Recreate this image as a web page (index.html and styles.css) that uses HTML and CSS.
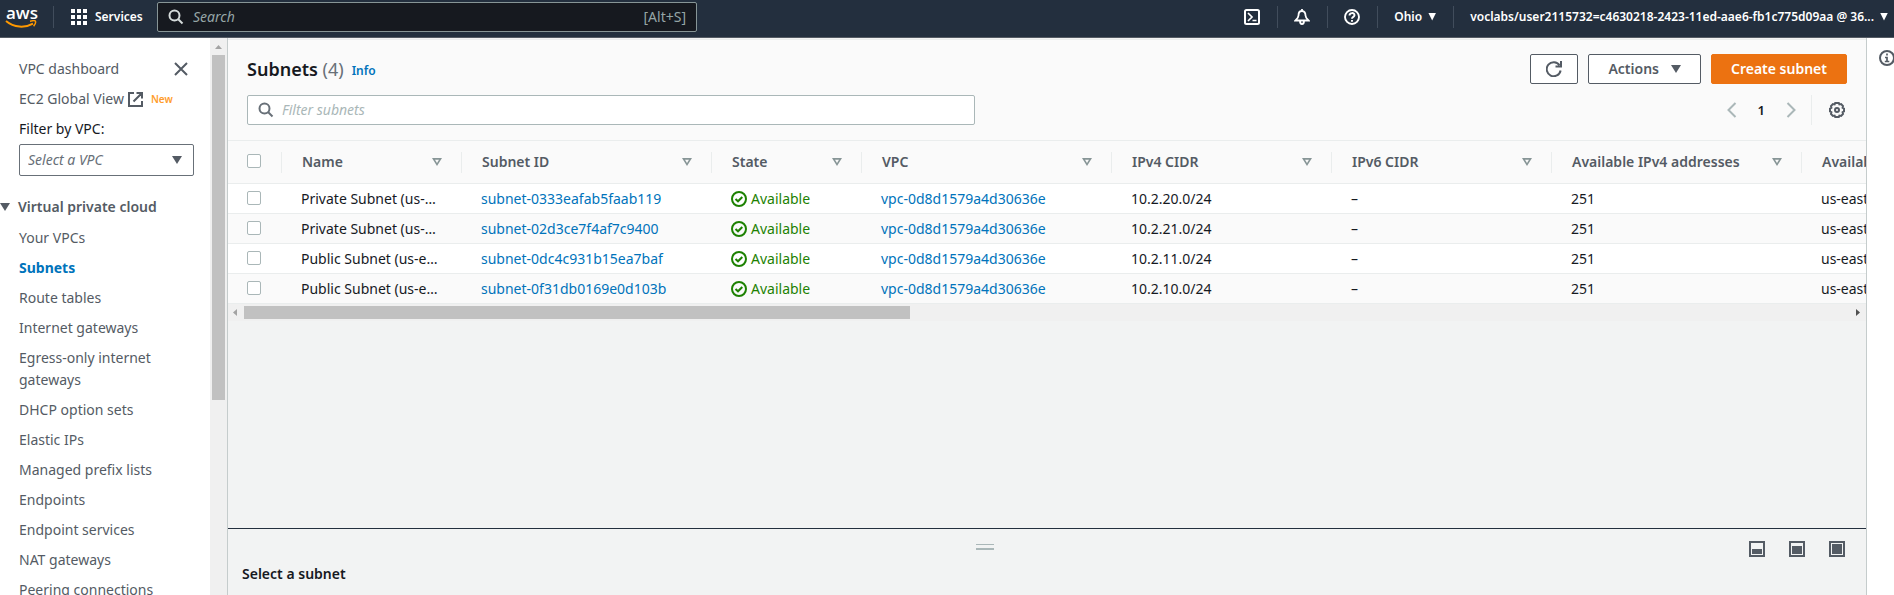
FILE: index.html
```html
<!DOCTYPE html>
<html lang="en">
<head>
<meta charset="utf-8">
<title>Subnets | VPC Management Console</title>
<link rel="stylesheet" href="styles.css">
</head>
<body>
<header class="topbar">
  <a class="logo" href="#" aria-label="aws">
    <span class="logo-text">aws</span>
    <svg class="logo-smile" width="32" height="9" viewBox="0 0 32 9"><path d="M1 1C9 7.800 20 8.200 28 3.600" fill="none" stroke="#f90" stroke-width="2"/><path d="M25 1.300C27.500.6 30 .5 30.400 1.200 30.800 2 30 4.600 28.600 6.300" fill="none" stroke="#f90" stroke-width="1.500"/></svg>
  </a>
  <button class="services" type="button">
    <svg width="16" height="16" fill="#fff"><path d="M0 0h4v4H0zM6 0h4v4H6zM12 0h4v4h-4zM0 6h4v4H0zM6 6h4v4H6zM12 6h4v4h-4zM0 12h4v4H0zM6 12h4v4H6zM12 12h4v4h-4z"/></svg>
    Services
  </button>
  <label class="global-search">
    <svg width="16" height="16" viewBox="0 0 16 16" fill="none" stroke="#d5dbdb" stroke-width="2"><circle cx="6.500" cy="6.500" r="5"/><path d="M10 10l4.500 4.500"/></svg>
    <input type="search" placeholder="Search" aria-label="Search">
    <span>[Alt+S]</span>
  </label>
  <nav class="utilities">
    <button type="button" aria-label="CloudShell"><svg width="16" height="16" viewBox="0 0 16 16" fill="none" stroke="#fff" stroke-width="2"><rect x="1" y="1" width="14" height="14" rx="1.500"/><path d="M4 4l4 4-4 4M8.500 11.500h4" stroke-width="1.700"/></svg></button>
    <button type="button" aria-label="Notifications"><svg width="16" height="16" viewBox="0 0 16 16" fill="none" stroke="#fff" stroke-width="1.800"><path d="M8 0v2M8 2C5.500 2 4.500 4 4.500 6.500 4.500 8.500 3 10 1.500 11.500h13C13 10 11.500 8.500 11.500 6.500 11.500 4 10.500 2 8 2zM6 12c0 4 4 4 4 0"/></svg></button>
    <button type="button" aria-label="Help"><svg width="16" height="16" viewBox="0 0 16 16" fill="none" stroke="#fff" stroke-width="1.900"><circle cx="8" cy="8" r="7"/><path d="M5.500 6.500C5.500 3.300 10.500 3.300 10.500 6.300 10.500 8 8 7.800 8 9.800M8 11v1.700"/></svg></button>
    <button type="button" class="region">Ohio <i class="caret"></i></button>
    <button type="button" class="account"><span>voclabs/user2115732=c4630218-2423-11ed-aae6-fb1c775d09aa @ 36...</span> <i class="caret"></i></button>
  </nav>
</header>
<div class="shell">
  <aside class="sidebar">
    <nav class="side-nav">
      <div class="side-row"><a href="#">VPC dashboard</a>
        <button type="button" class="close" aria-label="Close"><svg width="14" height="14" viewBox="0 0 14 14" stroke="#545b64" stroke-width="2"><path d="M1 1l12 12M13 1L1 13"/></svg></button></div>
      <a class="ec2" href="#">EC2 Global View
        <svg width="15" height="15" viewBox="0 0 15 15" fill="none" stroke="#545b64" stroke-width="2"><path d="M6 1H1v13h13V9M8.500 1H14v5.500M14 1L5.500 9.500"/></svg>
        <span class="new">New</span></a>
      <label for="vpc">Filter by VPC:</label>
      <div class="select-wrap"><select id="vpc"><option>Select a VPC</option></select></div>
      <h2><i class="caret"></i>Virtual private cloud</h2>
      <ul>
        <li><a href="#">Your VPCs</a></li>
        <li><a href="#" class="current">Subnets</a></li>
        <li><a href="#">Route tables</a></li>
        <li><a href="#">Internet gateways</a></li>
        <li><a href="#">Egress-only internet gateways</a></li>
        <li><a href="#">DHCP option sets</a></li>
        <li><a href="#">Elastic IPs</a></li>
        <li><a href="#">Managed prefix lists</a></li>
        <li><a href="#">Endpoints</a></li>
        <li><a href="#">Endpoint services</a></li>
        <li><a href="#">NAT gateways</a></li>
        <li><a href="#">Peering connections</a></li>
      </ul>
    </nav>
    <div class="vscroll"><i class="up"></i><div class="thumb"></div></div>
  </aside>
  <main class="content">
    <section class="panel">
      <div class="panel-head">
        <h1>Subnets <span>(4)</span></h1><a class="info" href="#">Info</a>
        <div class="actions">
          <button type="button" class="btn refresh" aria-label="Refresh"><svg width="16" height="16" viewBox="0 0 16 16" fill="none" stroke="#545b64" stroke-width="2"><path d="M14.600 9.500A7 7 0 1 1 13.500 4.300M15 0v5.500H9.500"/></svg></button>
          <button type="button" class="btn">Actions <i class="caret"></i></button>
          <button type="button" class="btn primary">Create subnet</button>
        </div>
      </div>
      <div class="tools">
        <label class="filter">
          <svg width="16" height="16" viewBox="0 0 16 16" fill="none" stroke="#687078" stroke-width="2"><circle cx="6.500" cy="6.500" r="5"/><path d="M10 10l4.500 4.500"/></svg>
          <input type="search" placeholder="Filter subnets" aria-label="Filter subnets">
        </label>
        <div class="pager">
          <button type="button" aria-label="Previous page"><svg width="10" height="16" viewBox="0 0 10 16" fill="none" stroke="#aab7b8" stroke-width="2"><path d="M8.500 1L1.500 8l7 7"/></svg></button>
          <span>1</span>
          <button type="button" aria-label="Next page"><svg width="10" height="16" viewBox="0 0 10 16" fill="none" stroke="#aab7b8" stroke-width="2"><path d="M1.500 1l7 7-7 7"/></svg></button>
          <button type="button" class="gear" aria-label="Preferences"><svg width="16" height="16" viewBox="0 0 16 16" fill="none" stroke="#545b64" stroke-width="2"><path d="M6.200 1h3.600l.6 1.400 1.700-.3 1.900 2-.4 1.700L15 6.500v3l-1.400.7.400 1.700-1.900 2-1.700-.3L9.800 15H6.200l-.6-1.400-1.700.3-1.900-2 .4-1.700L1 9.500v-3l1.400-.7L2 4.100l1.900-2 1.700.3z"/><circle cx="8" cy="8" r="2"/></svg></button>
        </div>
      </div>
      <div class="table-clip">
      <table>
        <colgroup><col class="c-check"><col class="c-name"><col class="c-wide"><col class="c-state"><col class="c-wide"><col class="c-cidr"><col class="c-cidr"><col class="c-wide"><col class="c-wide"></colgroup>
        <thead><tr>
          <th><input type="checkbox" aria-label="Select all"></th>
          <th><div>Name<i class="sort"></i></div></th>
          <th><div>Subnet ID<i class="sort"></i></div></th>
          <th><div>State<i class="sort"></i></div></th>
          <th><div>VPC<i class="sort"></i></div></th>
          <th><div>IPv4 CIDR<i class="sort"></i></div></th>
          <th><div>IPv6 CIDR<i class="sort"></i></div></th>
          <th><div>Available IPv4 addresses<i class="sort"></i></div></th>
          <th><div>Availability Zone</div></th>
        </tr></thead>
        <tbody>
          <tr><td><input type="checkbox" aria-label="Select subnet 1"></td><td>Private Subnet (us-…</td><td><a href="#">subnet-0333eafab5faab119</a></td><td class="ok"><svg width="16" height="16" viewBox="0 0 16 16"><circle cx="8" cy="8" r="7"/><path d="M4.500 8l2.500 2.300 4.300-4.300"/></svg>Available</td><td><a href="#">vpc-0d8d1579a4d30636e</a></td><td>10.2.20.0/24</td><td>–</td><td>251</td><td>us-east-2a</td></tr>
          <tr><td><input type="checkbox" aria-label="Select subnet 2"></td><td>Private Subnet (us-…</td><td><a href="#">subnet-02d3ce7f4af7c9400</a></td><td class="ok"><svg width="16" height="16" viewBox="0 0 16 16"><circle cx="8" cy="8" r="7"/><path d="M4.500 8l2.500 2.300 4.300-4.300"/></svg>Available</td><td><a href="#">vpc-0d8d1579a4d30636e</a></td><td>10.2.21.0/24</td><td>–</td><td>251</td><td>us-east-2b</td></tr>
          <tr><td><input type="checkbox" aria-label="Select subnet 3"></td><td>Public Subnet (us-e…</td><td><a href="#">subnet-0dc4c931b15ea7baf</a></td><td class="ok"><svg width="16" height="16" viewBox="0 0 16 16"><circle cx="8" cy="8" r="7"/><path d="M4.500 8l2.500 2.300 4.300-4.300"/></svg>Available</td><td><a href="#">vpc-0d8d1579a4d30636e</a></td><td>10.2.11.0/24</td><td>–</td><td>251</td><td>us-east-2b</td></tr>
          <tr><td><input type="checkbox" aria-label="Select subnet 4"></td><td>Public Subnet (us-e…</td><td><a href="#">subnet-0f31db0169e0d103b</a></td><td class="ok"><svg width="16" height="16" viewBox="0 0 16 16"><circle cx="8" cy="8" r="7"/><path d="M4.500 8l2.500 2.300 4.300-4.300"/></svg>Available</td><td><a href="#">vpc-0d8d1579a4d30636e</a></td><td>10.2.10.0/24</td><td>–</td><td>251</td><td>us-east-2a</td></tr>
        </tbody>
      </table>
      </div>
      <div class="hscroll"><i class="left"></i><div class="rail"><div class="thumb"></div></div><i class="right"></i></div>
    </section>
    <section class="split">
      <div class="split-bar">
        <span class="handle"></span>
        <div class="sizes">
          <button type="button" aria-label="Small panel"><svg width="16" height="16" viewBox="0 0 16 16"><rect x="1" y="1" width="14" height="14"/><path d="M3 8h10v5H3z"/></svg></button>
          <button type="button" aria-label="Medium panel"><svg width="16" height="16" viewBox="0 0 16 16"><rect x="1" y="1" width="14" height="14"/><path d="M3 5h10v8H3z"/></svg></button>
          <button type="button" aria-label="Full panel"><svg width="16" height="16" viewBox="0 0 16 16"><rect x="1" y="1" width="14" height="14"/><path d="M3 3h10v10H3z"/></svg></button>
        </div>
      </div>
      <h3>Select a subnet</h3>
    </section>
  </main>
  <aside class="help">
    <button type="button" aria-label="Open help"><svg width="16" height="16" viewBox="0 0 16 16" fill="none" stroke="#545b64" stroke-width="2"><circle cx="8" cy="8" r="7"/><path d="M8 3.500v2M6 7.500h2v4M5.800 11.500h4.500" stroke-width="1.700"/></svg></button>
  </aside>
</div>
</body>
</html>
```
FILE: styles.css
```css
* { box-sizing: border-box; }
body {
  margin: 0; height: 100vh; overflow: hidden;
  display: flex; flex-direction: column;
  font: 14px/22px "Noto Sans", "Open Sans", sans-serif; color: #16191f; background: #fff;
}
button { font: inherit; color: inherit; background: none; border: 0; padding: 0; display: inline-flex; align-items: center; }
input { font: inherit; }
a { color: #0073bb; text-decoration: none; }
svg { display: block; flex: none; }
h1, h2, h3, ul { margin: 0; padding: 0; }
.caret { display: inline-block; width: 10px; height: 8px; background: currentColor; clip-path: polygon(0 0, 100% 0, 50% 100%); flex: none; }

.topbar { flex: none; height: 38px; padding: 0 6px 4px 5px; display: flex; align-items: center; background: #232f3e; border-bottom: 1px solid #545b64; color: #fff; font-size: 12px; font-weight: 600; }
.logo { width: 49px; height: 22px; border-right: 1px solid #414d5c; color: #fff; display: flex; flex-direction: column; }
.logo-text { font: 600 17px/14px "Open Sans", sans-serif; padding-left: 1px; }
.logo-smile { flex: none; }
.services { gap: 8px; padding: 0 17px; width: 103px; }
.global-search { width: 540px; height: 30px; display: flex; align-items: center; gap: 9px; padding: 0 10px; background: #16191f; border: 1px solid #879596; border-radius: 2px; font-size: 14px; font-weight: 400; color: #95a5a6; }
.global-search input, .filter input { flex: 1; min-width: 0; border: 0; outline: 0; padding: 0; background: none; color: inherit; }
.global-search input::placeholder { color: #95a5a6; font-style: italic; opacity: 1; }
.utilities { margin-left: auto; display: flex; align-items: center; }
.utilities button { height: 22px; padding: 0 17px 0 16px; border-right: 1px solid #414d5c; }
.utilities .caret { width: 8px; margin-left: 6px; }
.utilities .account { border: 0; padding-right: 0; }

.shell { flex: 1; min-height: 0; display: flex; }
.sidebar { flex: none; width: 227px; display: flex; }
.side-nav { flex: 1; padding: 20px 16px 0 19px; display: flex; flex-direction: column; gap: 8px; }
.side-nav > * { flex: none; }
.side-nav a { color: #545b64; }
.side-row { display: flex; justify-content: space-between; align-items: center; }
.close { padding-right: 6px; }
.ec2 { display: flex; align-items: center; gap: 4px; }
.new { color: #ff9d2d; font-size: 10px; font-weight: 600; margin-left: 4px; }
.select-wrap { height: 32px; margin-top: -4px; display: flex; }
.select-wrap select { width: 100%; appearance: none; font: inherit; font-style: italic; color: #687078; padding: 0 8px; border: 1px solid #687078; border-radius: 2px; background: #fff; }
.select-wrap::after { content: ""; width: 10px; height: 8px; margin: 12px 12px 0 -22px; background: #545b64; clip-path: polygon(0 0, 100% 0, 50% 100%); z-index: 1; flex: none; }
.side-nav h2 { font-size: 14px; font-weight: 600; color: #545b64; margin: 12px 0 1px -19px; display: flex; align-items: center; gap: 8px; }
.side-nav ul { list-style: none; display: flex; flex-direction: column; gap: 8px; }
.side-nav li { width: 150px; }
.side-nav .current { color: #0073bb; font-weight: 700; }
.vscroll { width: 17px; background: #f0f0f0; display: flex; flex-direction: column; align-items: center; }
.vscroll .up { width: 7px; height: 4px; margin: 7px 0 6px; background: #a3a3a3; clip-path: polygon(50% 0, 100% 100%, 0 100%); }
.vscroll .thumb { width: 13px; height: 62%; background: #c1c1c1; }

.content { flex: 1; min-width: 0; display: flex; flex-direction: column; background: #f2f3f3; border: solid #c5cccc; border-width: 0 1px; }
.panel { flex: 1; min-height: 0; padding-top: 1px; }
.panel-head { display: flex; align-items: center; padding: 14px 19px 11px; background: #fafafa; border-top: 1px solid #eaeded; }
h1 { font-size: 18px; font-weight: 600; }
h1 span { font-weight: 400; color: #687078; }
.info { font-size: 12px; font-weight: 600; margin: 4px 0 0 8px; }
.actions { margin-left: auto; display: flex; gap: 10px; }
.btn { height: 30px; padding: 0 19px; border: 1px solid #545b64; border-radius: 2px; background: #fff; color: #545b64; font-weight: 600; }
.btn .caret { margin-left: 12px; }
.btn.refresh { padding: 0 15px; }
.btn.primary { background: #ec7211; border-color: #ec7211; color: #fff; }
.tools { display: flex; justify-content: space-between; padding: 0 19px 15px; background: #fafafa; border-bottom: 1px solid #eaeded; }
.filter { flex: 0 1 728px; height: 30px; display: flex; align-items: center; gap: 8px; padding: 0 10px; background: #fff; border: 1px solid #aab7b8; border-radius: 2px; }
.filter input::placeholder { color: #aab7b8; font-style: italic; opacity: 1; }
.pager { display: flex; align-items: center; gap: 21px; font-size: 13px; font-weight: 600; }
.gear { height: 30px; padding: 0 2px 0 17px; margin-left: -6px; border-left: 1px solid #eaeded; }
.table-clip { overflow: hidden; }
table { table-layout: fixed; width: 1824px; border-collapse: separate; border-spacing: 0; }
.c-check { width: 54px; } .c-name { width: 180px; } .c-wide { width: 250px; } .c-state { width: 150px; } .c-cidr { width: 220px; }
th { height: 43px; padding: 0; text-align: left; font-weight: 600; color: #545b64; background: #fafafa; border-bottom: 1px solid #eaeded; }
th div { display: flex; justify-content: space-between; align-items: center; padding: 0 20px; height: 22px; }
th:not(:last-child) { background-image: linear-gradient(#eaeded, #eaeded); background-size: 1px 21px; background-position: right center; background-repeat: no-repeat; }
.sort { width: 10px; height: 8px; background: #879596; clip-path: polygon(evenodd, 0 0, 100% 0, 50% 100%, 0 0, 30% 22%, 70% 22%, 50% 64%, 30% 22%, 0 0); }
td { height: 30px; padding: 0 20px 0 19px; border-bottom: 1px solid #eaeded; white-space: nowrap; background: #fff; }
tbody tr:nth-child(even) td { background: #fafafa; }
th:first-child { padding-left: 19px; }
table input { appearance: none; display: block; width: 14px; height: 14px; margin: 0 0 2px; border: 1px solid #aab7b8; border-radius: 2px; background: #fff; }
td.ok { color: #1d8102; padding-right: 0; }
.ok svg { display: inline-block; vertical-align: -3px; margin-right: 4px; fill: none; stroke: #1d8102; stroke-width: 2; }
.hscroll { height: 17px; background: #f0f0f0; display: flex; align-items: center; }
.hscroll .left, .hscroll .right { width: 4px; height: 7px; margin: 0 7px 0 5px; background: #a3a3a3; clip-path: polygon(0 50%, 100% 0, 100% 100%); }
.hscroll .right { background: #505050; clip-path: polygon(0 0, 100% 50%, 0 100%); margin: 0 6px; }
.rail { flex: 1; height: 13px; }
.hscroll .thumb { width: 41.500%; height: 13px; background: #c1c1c1; }

.split { flex: none; height: 67px; border-top: 1px solid #232f3e; padding: 12px 21px 0 14px; }
.split-bar { display: flex; align-items: flex-start; gap: 21px; height: 22px; }
.handle { width: 18px; height: 6px; margin: 3px auto 0; border: solid #aab7b8; border-width: 1px 0 2px; }
.sizes { display: flex; gap: 24px; }
.sizes svg { fill: #545b64; }
.sizes rect { fill: none; stroke: #545b64; stroke-width: 2; }
h3 { font-size: 14px; font-weight: 600; }

.help { flex: none; width: 27px; padding: 12px 0 0 12px; overflow: hidden; }
```
